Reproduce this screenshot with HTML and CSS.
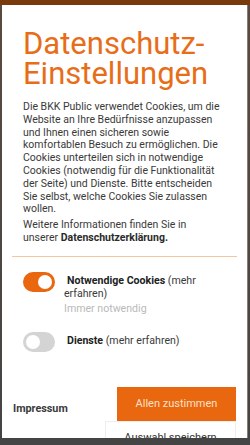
FILE: index.html
```html
<!DOCTYPE html>
<html lang="de">
<head>
<meta charset="utf-8">
<link rel="stylesheet" href="styles.css">
</head>
<body>
<div class="modal">
  <h1 class="title"><span class="tline">Datenschutz-</span><span class="tline">Einstellungen</span></h1>
  <div class="intro">
    <p>Die BKK Public verwendet Cookies, um die Website an Ihre Bedürfnisse anzupassen und Ihnen einen sicheren sowie komfortablen Besuch zu ermöglichen. Die Cookies unterteilen sich in notwendige Cookies (notwendig für die Funktionalität der Seite) und Dienste. Bitte entscheiden Sie selbst, welche Cookies Sie zulassen wollen.</p>
    <p class="more">Weitere Informationen finden Sie in unserer <b>Datenschutzerklärung.</b></p>
  </div>
  <hr class="divider">
  <div class="option">
    <span class="toggle on"><span class="knob"></span></span>
    <div class="opt-text">
      <div class="opt-label"><b class="lead">Notwendige Cookies</b> (mehr erfahren)</div>
      <div class="opt-note">Immer notwendig</div>
    </div>
  </div>
  <div class="option second">
    <span class="toggle off"><span class="knob"></span></span>
    <div class="opt-text">
      <div class="opt-label"><b class="lead">Dienste</b> (mehr erfahren)</div>
    </div>
  </div>
  <div class="footer">
    <span class="impressum">Impressum</span>
    <div class="buttons">
      <span class="btn primary">Allen zustimmen</span>
      <span class="btn secondary">Auswahl speichern</span>
    </div>
  </div>
</div>
</body>
</html>
```
FILE: styles.css
```css
html, body {
  margin: 0;
  padding: 0;
}
body {
  width: 250px;
  height: 445px;
  overflow: hidden;
  background: linear-gradient(to bottom, #7a3b0c 0, #7a3b0c 5px, #5a4a40 5px, #444 100%);
  padding: 5px 2px 0 2px;
  box-sizing: border-box;
  font-family: Roboto, "Liberation Sans", sans-serif;
}
.modal {
  background: #fff;
  height: 433px;
  overflow: hidden;
  padding: 24px 10px 0 10px;
  box-sizing: border-box;
  border-right: 1px solid #8a7d75;
}
.title {
  margin: 0 0 0 11px;
  font-size: 31px;
  font-weight: 400;
  color: #e86d18;
}
.tline {
  display: block;
  height: 30px;
  line-height: 30px;
}
.intro {
  margin: 12px 12px 0 11px;
  font-size: 10.5px;
  line-height: 12.8px;
  color: #3a3a3a;
}
.intro p {
  margin: 0 0 3px 0;
}
.intro p.more {
  max-width: 185px;
}
.intro b {
  font-weight: 700;
  color: #2b2b2b;
}
.divider {
  border: 0;
  border-top: 1px solid #f2c7a0;
  margin: 11px 0 0 0;
  height: 0;
}
.option {
  display: flex;
  align-items: flex-start;
  margin: 15px 0 0 11px;
  gap: 9px;
}
.option.second {
  margin-top: 17px;
}
.toggle {
  flex: none;
  width: 32px;
  height: 20px;
  border-radius: 10px;
  display: flex;
  align-items: center;
  padding: 0 3px;
  box-sizing: border-box;
}
.toggle.on {
  background: #e8670f;
  justify-content: flex-end;
}
.toggle.off {
  background: #d4d4d4;
  justify-content: flex-start;
}
.knob {
  width: 14px;
  height: 14px;
  border-radius: 50%;
  background: #fff;
}
.opt-text {
  font-size: 10.6px;
  line-height: 13px;
  color: #3a3a3a;
  padding-top: 2px;
}
.opt-label .lead {
  color: #222;
  font-weight: 700;
  padding-left: 3px;
}
.opt-note {
  color: #b9b9b9;
  margin-top: 2px;
}
.footer {
  display: flex;
  justify-content: space-between;
  align-items: flex-start;
  margin-top: 35px;
  padding: 0 1px 0 1px;
}
.impressum {
  font-size: 10.8px;
  font-weight: 700;
  color: #3a3a3a;
  margin-top: 15px;
}
.buttons {
  display: flex;
  flex-direction: column;
  align-items: flex-end;
}
.btn {
  display: flex;
  align-items: center;
  justify-content: center;
  font-size: 11px;
  box-sizing: border-box;
}
.btn.primary {
  width: 119px;
  height: 34px;
  background: #e8670f;
  color: #fde0c8;
}
.btn.secondary {
  width: 131px;
  height: 34px;
  background: #fff;
  border: 1px solid #eee;
  color: #333;
}
```
